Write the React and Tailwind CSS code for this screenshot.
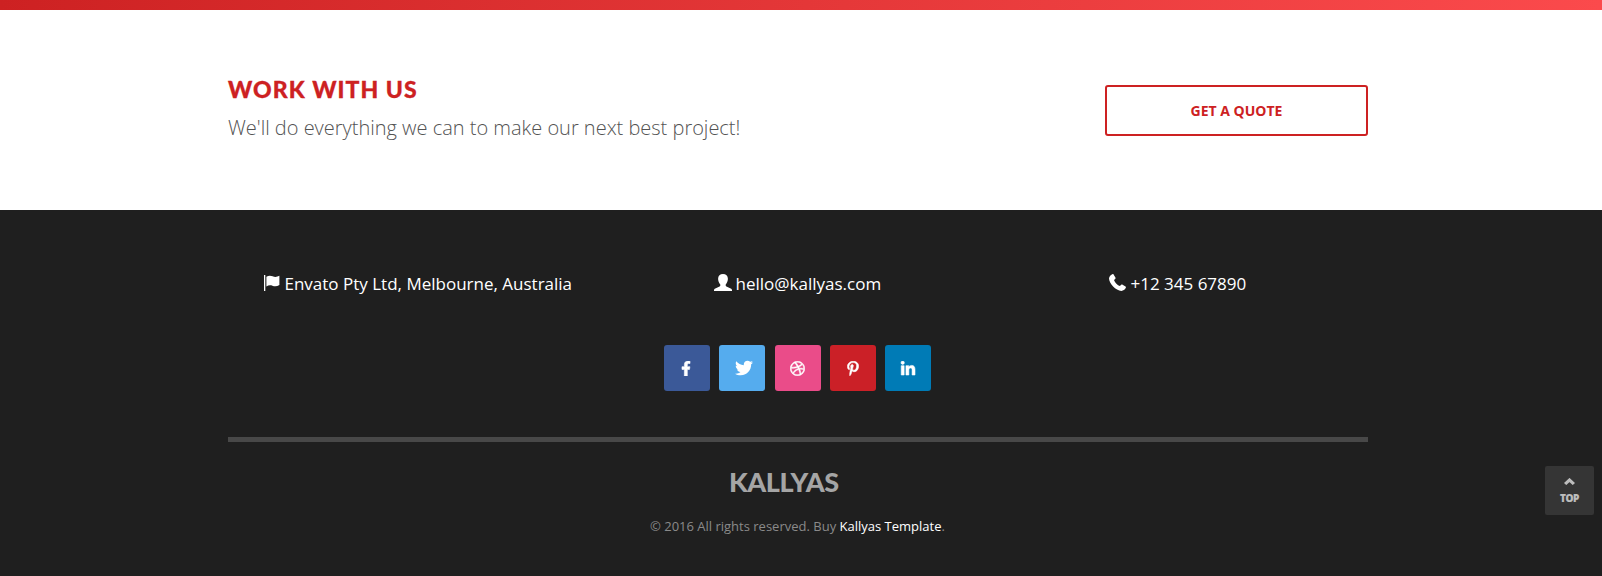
import { FaTwitter, FaDribbble, FaPinterestP, FaLinkedinIn, FaFacebookF } from "react-icons/fa";

function FlagIcon() {
  return (
    <svg viewBox="0 0 16 16" className="h-4 w-4 shrink-0 fill-white">
      <path d="M0 0h1.300v16H0z" />
      <path d="M2.400 1.800C4.500.4 6.600.4 8.600 1.300c2.300 1 4.300.8 6.800-.5v9.200c-2.400 1.500-4.700 1.600-7 .7-2-.8-4.100-.6-6 .9z" />
    </svg>
  );
}

function UserIcon() {
  return (
    <svg viewBox="0 0 18 17" className="h-[17px] w-[18px] shrink-0 fill-white">
      <path d="M9 0c2.900 0 4.900 1.900 4.900 4.700 0 2.100-.8 4.200-2.200 5.700v1.100c0 .5.2.8.700 1l4.300 1.900c.8.3 1.300.9 1.300 1.700V17H0v-.9c0-.8.5-1.400 1.300-1.700l4.300-1.900c.5-.2.700-.5.7-1v-1.100C4.900 8.900 4.100 6.800 4.100 4.700 4.100 1.900 6.100 0 9 0z" />
    </svg>
  );
}

function PhoneIcon() {
  return (
    <svg viewBox="0 0 17 17" className="h-[17px] w-[17px] shrink-0 fill-white">
      <path d="M3.300.2c.5-.3 1-.2 1.300.3l1.800 3c.3.5.2 1-.2 1.400L5 6.100c.5 1.300 1.300 2.500 2.400 3.600 1.100 1.100 2.200 1.900 3.500 2.400l1.300-1.300c.4-.4.9-.4 1.400-.1l2.900 1.900c.5.3.6.9.2 1.400-1 1.700-2.500 2.700-4.200 2.900-3-.2-6-1.900-8.400-4.400C1.700 10.100.2 7.200 0 4.500.2 2.500 1.400 1.100 3.300.2z" />
    </svg>
  );
}

const socials = [
  { name: "Facebook", Icon: FaFacebookF, tile: "bg-[#3b5998]", icon: "h-[15px] w-[10px] -ml-[2px] stroke-current stroke-[20]" },
  { name: "Twitter", Icon: FaTwitter, tile: "bg-[#55acee]", icon: "h-[18px] w-[18px] ml-[4px]" },
  { name: "Dribbble", Icon: FaDribbble, tile: "bg-[#ea4c89] ml-px", icon: "h-[15px] w-[15px] -ml-px stroke-current stroke-[18]" },
  { name: "Pinterest", Icon: FaPinterestP, tile: "bg-[#cb2027]", icon: "h-[15px] w-[12px] stroke-current stroke-[18]" },
  { name: "LinkedIn", Icon: FaLinkedinIn, tile: "bg-[#007bb6]", icon: "mt-px h-[16px] w-[16px] stroke-current stroke-[18]" },
];

export default function App() {
  return (
    <div className="relative flex h-[576px] w-[1602px] flex-col overflow-hidden bg-white font-['Open_Sans',sans-serif]">
      <div className="h-[10px] shrink-0 bg-linear-to-r from-[#cd2122] to-[#fb4a4c]" />
      <section className="ml-[228px] flex h-[200px] w-[1140px] shrink-0 justify-between">
        <div className="pt-[63px]">
          <h2 className="h-[32px] text-[23px] leading-[32px] font-black tracking-[1.05px] text-[#cd2122] font-['Lato',sans-serif] [-webkit-text-stroke:0.3px_#cd2122]">WORK WITH US</h2>
          <p className="mt-[9px] text-[20px] leading-[28px] font-light tracking-[-0.01px] text-[#535353]">We'll do everything we can to make our next best project!</p>
        </div>
        <a className="mt-[75px] flex h-[51px] w-[263px] items-center justify-center rounded-[3px] border-2 border-[#cd2122] text-[14px] leading-[19px] font-bold text-[#cd2122]">GET A QUOTE</a>
      </section>
      <footer className="flex grow flex-col bg-[#1f1f1f] pl-[228px]">
        <div className="flex h-[135px] w-[1140px] pt-[60px] text-[17px] leading-[28px] text-white">
          <div className="flex w-[485px] items-start pl-[36px]">
            <div className="pt-[5px]"><FlagIcon /></div>
            <span className="ml-[4.500px]">Envato Pty Ltd, Melbourne, Australia</span>
          </div>
          <div className="flex w-[396px] items-start">
            <div className="pt-[4px] pl-[0.500px]"><UserIcon /></div>
            <span className="ml-[4px]">hello@kallyas.com</span>
          </div>
          <div className="flex items-start">
            <div className="pt-[4px]"><PhoneIcon /></div>
            <span className="ml-[4.500px]">+12 345 67890</span>
          </div>
        </div>
        <div className="flex w-[1140px] gap-[9px] pl-[436px]">
          {socials.map(({ name, Icon, tile, icon }) => (
            <a key={name} aria-label={name} className={`flex h-[46px] w-[46px] items-center justify-center rounded-[3px] text-white ${tile}`}>
              <Icon className={icon} />
            </a>
          ))}
        </div>
        <div className="mt-[46px] h-[5px] w-[1140px] bg-[#484848]" />
        <div className="mt-[22px] h-[36px] pl-[501px] text-[27px] leading-[36px] font-black tracking-[-0.45px] text-[#a5a5a5] font-['Lato',sans-serif]">KALLYAS</div>
        <p className="mt-[16px] pl-[422px] text-[13px] leading-[20px] text-[#8a8a8a]">
          © 2016 All rights reserved. Buy <a className="text-white">Kallyas Template</a>.
        </p>
      </footer>
      <a className="absolute top-[466px] left-[1545px] flex h-[49px] w-[49px] flex-col items-center rounded-[2px] bg-[#353535] pt-[12px] text-[#bdbdbd]">
        <svg viewBox="0 0 10 7" className="h-[7px] w-[11px] fill-none stroke-current stroke-[3]" preserveAspectRatio="none">
          <path d="M1 6 5 2l4 4" />
        </svg>
        <span className="mt-[7px] text-[10px] leading-[13px] font-extrabold tracking-[-0.4px] [-webkit-text-stroke:0.2px_#bdbdbd]">TOP</span>
      </a>
    </div>
  );
}
